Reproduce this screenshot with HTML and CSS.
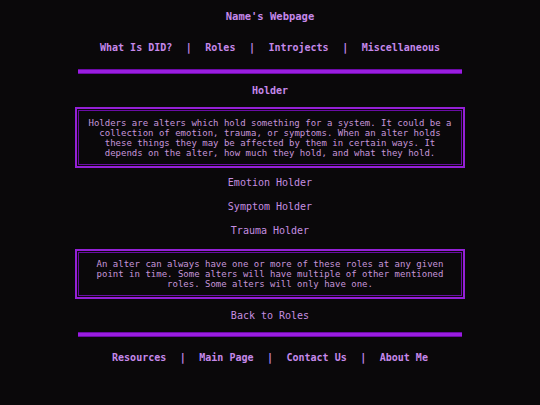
FILE: index.html
```html
<!DOCTYPE html>
<html>
<head>
<meta charset="utf-8">
<title>Holder</title>
<link rel="stylesheet" href="styles.css">
</head>
<body>
<div class="page">
  <h1 class="title">Name's Webpage</h1>
  <nav class="nav top-nav">
    <a href="#">What Is DID?</a><span class="sep">|</span><a href="#">Roles</a><span class="sep">|</span><a href="#">Introjects</a><span class="sep">|</span><a href="#">Miscellaneous</a>
  </nav>
  <div class="rule rule-top"></div>
  <h2 class="heading">Holder</h2>
  <div class="box box-one">Holders are alters which hold something for a system. It could be a collection of emotion, trauma, or symptoms. When an alter holds these things they may be affected by them in certain ways. It depends on the alter, how much they hold, and what they hold.</div>
  <div class="links">
    <a href="#">Emotion Holder</a>
    <a href="#">Symptom Holder</a>
    <a href="#">Trauma Holder</a>
  </div>
  <div class="box box-two">An alter can always have one or more of these roles at any given point in time. Some alters will have multiple of other mentioned roles. Some alters will only have one.</div>
  <a class="back" href="#">Back to Roles</a>
  <div class="rule rule-bottom"></div>
  <nav class="nav foot-nav">
    <a href="#">Resources</a><span class="sep">|</span><a href="#">Main Page</a><span class="sep">|</span><a href="#">Contact Us</a><span class="sep">|</span><a href="#">About Me</a>
  </nav>
</div>
</body>
</html>
```
FILE: styles.css
```css
html, body {
  margin: 0;
  padding: 0;
  background: #0a080a;
}
body {
  font-family: "DejaVu Sans Mono", monospace;
  color: #c68ee0;
  width: 540px;
  height: 405px;
  overflow: hidden;
}
a {
  color: #c68ee0;
  text-decoration: none;
}
.page {
  width: 390px;
  margin: 0 auto;
  display: flex;
  flex-direction: column;
  align-items: center;
  padding-top: 9px;
}
.title {
  margin: 0;
  font-size: 10.5px;
  line-height: 14px;
  font-weight: bold;
  color: #c688ea;
}
.nav {
  display: flex;
  justify-content: center;
  font-size: 10px;
  line-height: 14px;
  font-weight: bold;
  white-space: pre;
}
.nav a {
  color: #c688ea;
}
.sep {
  margin: 0 13.5px;
  color: #c688ea;
}
.top-nav {
  margin-top: 18px;
}
.rule {
  align-self: stretch;
  margin: 0 3px;
  height: 3px;
  background: #9a1ee0;
  border-top: 1px solid #6c0aa6;
  border-bottom: 1px solid #6c0aa6;
}
.rule-top {
  margin-top: 14px;
}
.heading {
  margin: 10px 0 0;
  font-size: 10px;
  line-height: 14px;
  font-weight: bold;
  color: #c688ea;
}
.box {
  align-self: stretch;
  border: 2px solid #9420d6;
  box-shadow: inset 0 0 0 1px #0a080a, inset 0 0 0 2px #6a0ca4;
  font-size: 9px;
  line-height: 10px;
  text-align: center;
  color: #c696da;
}
.box-one {
  margin-top: 9px;
  padding: 9px 8px 8px;
}
.box-two {
  margin-top: 11px;
  padding: 8px 10px;
}
.links {
  display: flex;
  flex-direction: column;
  align-items: center;
  gap: 10px;
  margin-top: 8px;
  font-size: 10px;
  line-height: 14px;
}
.back {
  margin-top: 10px;
  font-size: 10px;
  line-height: 14px;
}
.rule-bottom {
  margin-top: 9px;
}
.foot-nav {
  margin-top: 14px;
}
```
